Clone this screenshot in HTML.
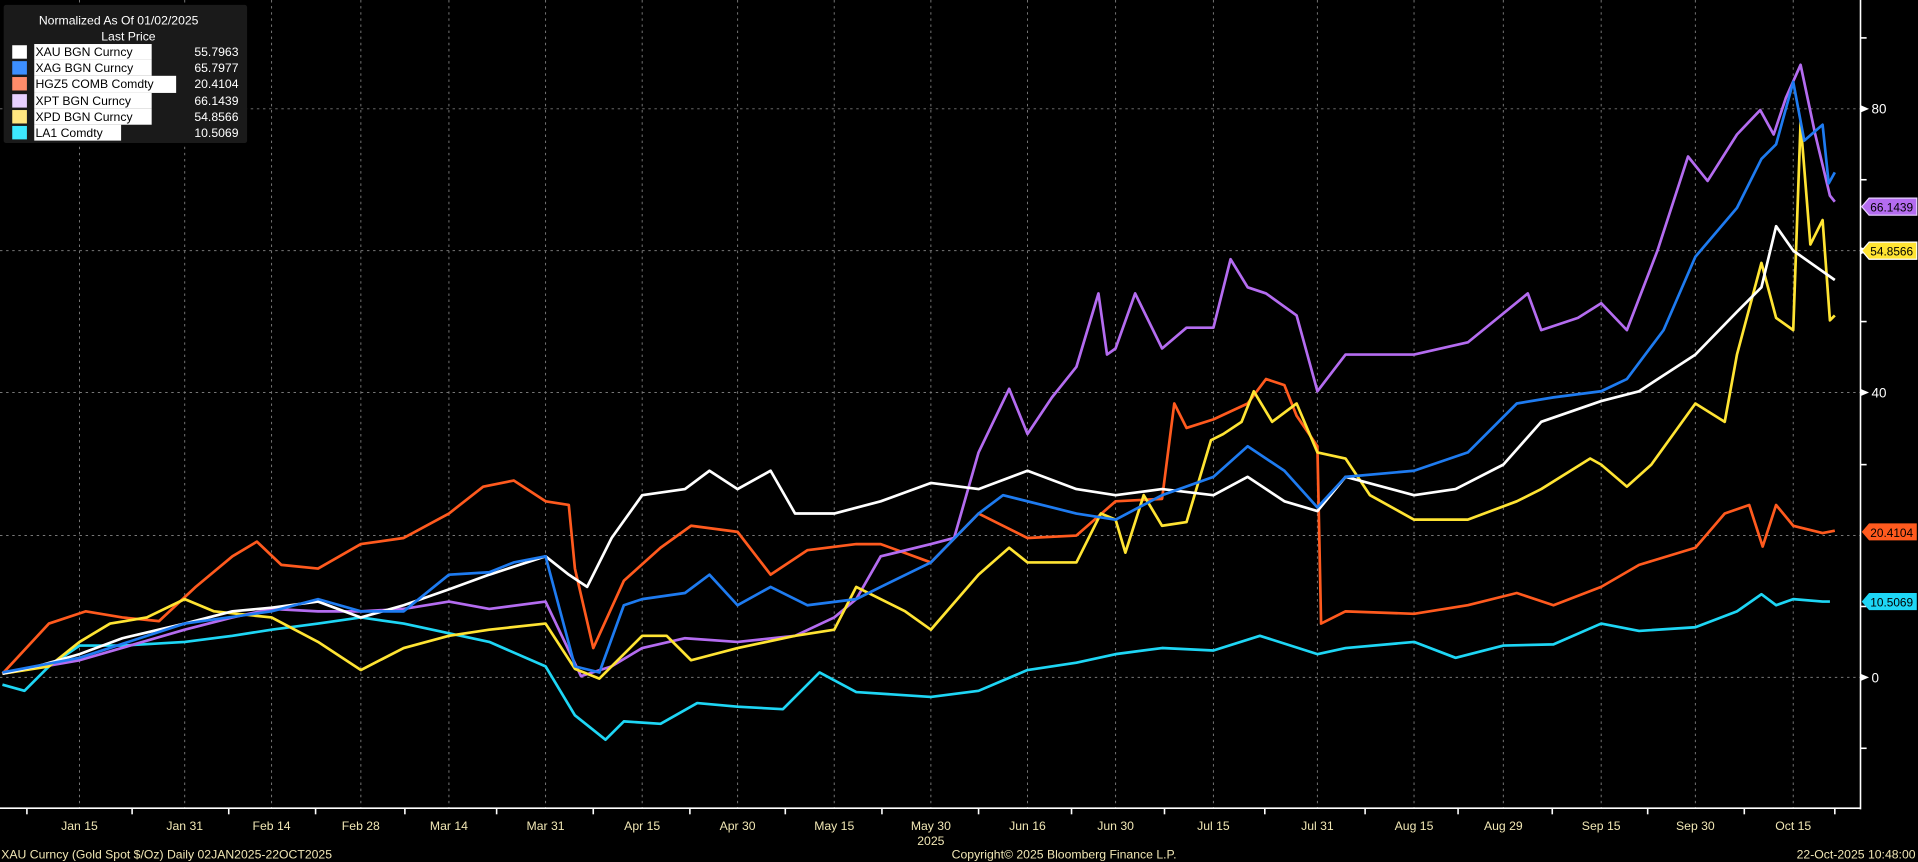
<!DOCTYPE html>
<html><head><meta charset="utf-8"><style>
html,body{margin:0;padding:0;background:#000;width:1918px;height:862px;overflow:hidden}
svg{display:block}
text{font-family:"Liberation Sans",sans-serif}
</style></head><body>
<svg width="1918" height="862" viewBox="0 0 1568 705" preserveAspectRatio="none" xmlns="http://www.w3.org/2000/svg">
<rect width="1568" height="705" fill="#000"/>
<g stroke="#777" stroke-width="0.8" stroke-dasharray="2,3">
<line x1="0" y1="89" x2="1521" y2="89"/><line x1="0" y1="205" x2="1521" y2="205"/><line x1="0" y1="321" x2="1521" y2="321"/><line x1="0" y1="438" x2="1521" y2="438"/><line x1="0" y1="554" x2="1521" y2="554"/>
<line x1="65" y1="0" x2="65" y2="661"/><line x1="151" y1="0" x2="151" y2="661"/><line x1="222" y1="0" x2="222" y2="661"/><line x1="295" y1="0" x2="295" y2="661"/><line x1="367" y1="0" x2="367" y2="661"/><line x1="446" y1="0" x2="446" y2="661"/><line x1="525" y1="0" x2="525" y2="661"/><line x1="603" y1="0" x2="603" y2="661"/><line x1="682" y1="0" x2="682" y2="661"/><line x1="761" y1="0" x2="761" y2="661"/><line x1="840" y1="0" x2="840" y2="661"/><line x1="912" y1="0" x2="912" y2="661"/><line x1="992" y1="0" x2="992" y2="661"/><line x1="1077" y1="0" x2="1077" y2="661"/><line x1="1156" y1="0" x2="1156" y2="661"/><line x1="1229" y1="0" x2="1229" y2="661"/><line x1="1309" y1="0" x2="1309" y2="661"/><line x1="1386" y1="0" x2="1386" y2="661"/><line x1="1466" y1="0" x2="1466" y2="661"/>
</g>
<g stroke="#fff" stroke-width="1.3">
<line x1="1521" y1="0" x2="1521" y2="662"/><line x1="0" y1="661" x2="1521" y2="661"/>
<line x1="1521" y1="31" x2="1526" y2="31"/><line x1="1521" y1="147" x2="1526" y2="147"/><line x1="1521" y1="263" x2="1526" y2="263"/><line x1="1521" y1="380" x2="1526" y2="380"/><line x1="1521" y1="496" x2="1526" y2="496"/><line x1="1521" y1="612" x2="1526" y2="612"/>
<line x1="22" y1="661" x2="22" y2="666"/><line x1="108" y1="661" x2="108" y2="666"/><line x1="187" y1="661" x2="187" y2="666"/><line x1="258" y1="661" x2="258" y2="666"/><line x1="331" y1="661" x2="331" y2="666"/><line x1="406" y1="661" x2="406" y2="666"/><line x1="485" y1="661" x2="485" y2="666"/><line x1="564" y1="661" x2="564" y2="666"/><line x1="642" y1="661" x2="642" y2="666"/><line x1="721" y1="661" x2="721" y2="666"/><line x1="800" y1="661" x2="800" y2="666"/><line x1="876" y1="661" x2="876" y2="666"/><line x1="952" y1="661" x2="952" y2="666"/><line x1="1034" y1="661" x2="1034" y2="666"/><line x1="1116" y1="661" x2="1116" y2="666"/><line x1="1192" y1="661" x2="1192" y2="666"/><line x1="1269" y1="661" x2="1269" y2="666"/><line x1="1347" y1="661" x2="1347" y2="666"/><line x1="1426" y1="661" x2="1426" y2="666"/><line x1="1500" y1="661" x2="1500" y2="666"/>
</g>
<g fill="#fff">
<polygon points="1521,86 1528,89 1521,92"/><polygon points="1521,202 1528,205 1521,208"/><polygon points="1521,318 1528,321 1521,324"/><polygon points="1521,551 1528,554 1521,557"/>
</g>
<g fill="#fff" font-size="11">
<text x="1530" y="93">80</text><text x="1530" y="209">60</text><text x="1530" y="325">40</text><text x="1530" y="558">0</text>
</g>
<g fill="none" stroke-width="2.2" stroke-linejoin="round">
<polyline stroke="#1ed6f5" points="2,560 20,565 40,545 65,528 100,528 151,525 190,520 222,515 260,510 295,505 330,510 400,525 446,545 470,585 495,605 510,590 540,592 570,575 603,578 640,580 670,550 700,566 761,570 800,565 840,548 880,542 912,535 950,530 992,532 1030,520 1077,535 1100,530 1156,525 1190,538 1229,528 1270,527 1309,510 1340,516 1386,513 1420,500 1440,486 1452,495 1466,490 1490,492 1496,492"/>
<polyline stroke="#ff5a1e" points="2,551 40,510 70,500 100,505 130,508 160,480 190,455 210,443 230,462 260,465 295,445 330,440 367,420 395,398 420,393 446,410 465,413 470,465 485,530 510,475 540,448 565,430 603,435 630,470 660,450 700,445 720,445 761,460 800,420 840,440 880,438 912,410 950,408 960,330 970,350 992,343 1020,330 1035,310 1050,315 1060,340 1077,365 1080,510 1100,500 1156,502 1200,495 1240,485 1270,495 1309,480 1340,462 1386,448 1410,420 1430,413 1441,447 1452,413 1466,430 1490,436 1500,434"/>
<polyline stroke="#b46cf0" points="2,551 65,540 151,515 190,505 222,498 260,500 295,500 330,498 367,492 400,498 446,492 475,553 500,545 525,530 560,522 603,525 650,520 682,505 700,490 720,455 761,445 780,440 800,370 825,318 840,355 860,325 880,300 898,240 905,290 912,285 928,240 950,285 970,268 992,268 1006,212 1020,235 1035,240 1060,258 1077,320 1100,290 1156,290 1200,280 1249,240 1260,270 1290,260 1309,248 1330,270 1355,205 1380,128 1396,148 1420,110 1439,90 1450,110 1460,80 1472,53 1484,110 1496,160 1500,165"/>
<polyline stroke="#ffe433" points="2,551 40,545 65,525 90,510 120,505 151,490 175,500 222,505 260,525 295,548 330,530 367,520 400,515 446,510 470,547 490,555 525,520 545,520 565,540 603,530 650,520 682,515 700,480 740,500 761,515 800,470 825,448 840,460 880,460 900,420 912,425 920,452 935,405 950,430 970,427 990,360 1000,355 1015,345 1025,320 1040,345 1060,330 1077,370 1100,375 1120,405 1156,425 1200,425 1240,410 1260,400 1300,375 1309,380 1330,398 1350,380 1386,330 1410,345 1420,290 1440,215 1452,260 1466,270 1472,100 1480,200 1490,180 1496,262 1500,258"/>
<polyline stroke="#ffffff" points="2,551 30,545 65,535 100,522 151,510 190,500 222,497 260,492 295,505 330,495 367,482 400,470 446,455 465,470 480,480 500,440 525,405 560,400 580,385 603,400 630,385 650,420 682,420 720,410 761,395 800,400 840,385 880,400 912,405 950,400 992,405 1020,390 1050,410 1077,418 1100,390 1156,405 1190,400 1229,380 1260,345 1309,328 1340,320 1386,290 1420,255 1440,235 1452,185 1466,205 1500,229"/>
<polyline stroke="#1e7bf0" points="2,550 65,538 151,510 222,500 260,490 295,500 330,500 367,470 400,468 420,460 446,455 470,545 490,550 510,495 525,490 560,485 580,470 603,495 630,480 660,495 700,490 720,480 761,460 800,420 820,405 880,420 912,425 950,405 992,390 1020,365 1050,385 1077,415 1100,390 1156,385 1200,370 1240,330 1270,325 1309,320 1330,310 1360,270 1386,210 1420,170 1440,130 1452,118 1466,67 1475,115 1490,102 1495,150 1500,141"/>
</g>
<g font-size="10" fill="#000">
<polygon points="1522,169 1528,162 1567,162 1567,176 1528,176" fill="#b46cf0" stroke="#e8d0ff" stroke-width="1"/><text x="1529" y="173" textLength="35" lengthAdjust="spacingAndGlyphs">66.1439</text>
<polygon points="1522,205 1528,198 1567,198 1567,212 1528,212" fill="#ffe433" stroke="#fff" stroke-width="1"/><text x="1529" y="209" textLength="35" lengthAdjust="spacingAndGlyphs">54.8566</text>
<polygon points="1522,435 1528,428 1567,428 1567,442 1528,442" fill="#ff5a1e"/><text x="1529" y="439" textLength="35" lengthAdjust="spacingAndGlyphs">20.4104</text>
<polygon points="1522,492 1528,485 1567,485 1567,499 1528,499" fill="#1ed6f5"/><text x="1529" y="496" textLength="35" lengthAdjust="spacingAndGlyphs">10.5069</text>
</g>
<g fill="#f0e6b4" font-size="10" text-anchor="middle">
<text x="65" y="679">Jan 15</text><text x="151" y="679">Jan 31</text><text x="222" y="679">Feb 14</text><text x="295" y="679">Feb 28</text><text x="367" y="679">Mar 14</text><text x="446" y="679">Mar 31</text><text x="525" y="679">Apr 15</text><text x="603" y="679">Apr 30</text><text x="682" y="679">May 15</text><text x="761" y="679">May 30</text><text x="840" y="679">Jun 16</text><text x="912" y="679">Jun 30</text><text x="992" y="679">Jul 15</text><text x="1077" y="679">Jul 31</text><text x="1156" y="679">Aug 15</text><text x="1229" y="679">Aug 29</text><text x="1309" y="679">Sep 15</text><text x="1386" y="679">Sep 30</text><text x="1466" y="679">Oct 15</text>
<text x="761" y="691">2025</text>
</g>
<g fill="#f0e6b4" font-size="10">
<text x="1" y="702">XAU Curncy (Gold Spot  $/Oz) Daily 02JAN2025-22OCT2025</text>
<text x="778" y="702">Copyright© 2025 Bloomberg Finance L.P.</text>
<text x="1566" y="702" text-anchor="end">22-Oct-2025 10:48:00</text>
</g>
<rect x="3" y="4" width="199" height="113" rx="2" fill="#1a1a1a"/>
<g font-size="10" fill="#fff">
<text x="97" y="20" text-anchor="middle">Normalized As Of 01/02/2025</text>
<text x="105" y="33" text-anchor="middle">Last Price</text>
</g>
<g>
<rect x="10" y="37" width="12" height="11" fill="#fff"/><rect x="10" y="50" width="12" height="11" fill="#3d8fff"/><rect x="10" y="63" width="12" height="11" fill="#ff8c6a"/><rect x="10" y="77" width="12" height="11" fill="#e8d0ff"/><rect x="10" y="90" width="12" height="11" fill="#ffe680"/><rect x="10" y="103" width="12" height="11" fill="#3de8ff"/>
</g>
<g fill="#fff">
<rect x="28" y="36" width="96" height="13"/><rect x="28" y="49" width="96" height="13"/><rect x="28" y="62" width="116" height="14"/><rect x="28" y="76" width="96" height="13"/><rect x="28" y="89" width="96" height="13"/><rect x="28" y="102" width="71" height="13"/>
</g>
<g font-size="10">
<text x="29" y="46" fill="#000">XAU BGN Curncy</text><text x="195" y="46" fill="#fff" text-anchor="end">55.7963</text>
<text x="29" y="59" fill="#000">XAG BGN Curncy</text><text x="195" y="59" fill="#fff" text-anchor="end">65.7977</text>
<text x="29" y="72" fill="#000">HGZ5 COMB Comdty</text><text x="195" y="72" fill="#fff" text-anchor="end">20.4104</text>
<text x="29" y="86" fill="#000">XPT BGN Curncy</text><text x="195" y="86" fill="#fff" text-anchor="end">66.1439</text>
<text x="29" y="99" fill="#000">XPD BGN Curncy</text><text x="195" y="99" fill="#fff" text-anchor="end">54.8566</text>
<text x="29" y="112" fill="#000">LA1 Comdty</text><text x="195" y="112" fill="#fff" text-anchor="end">10.5069</text>
</g>
</svg>
</body></html>
